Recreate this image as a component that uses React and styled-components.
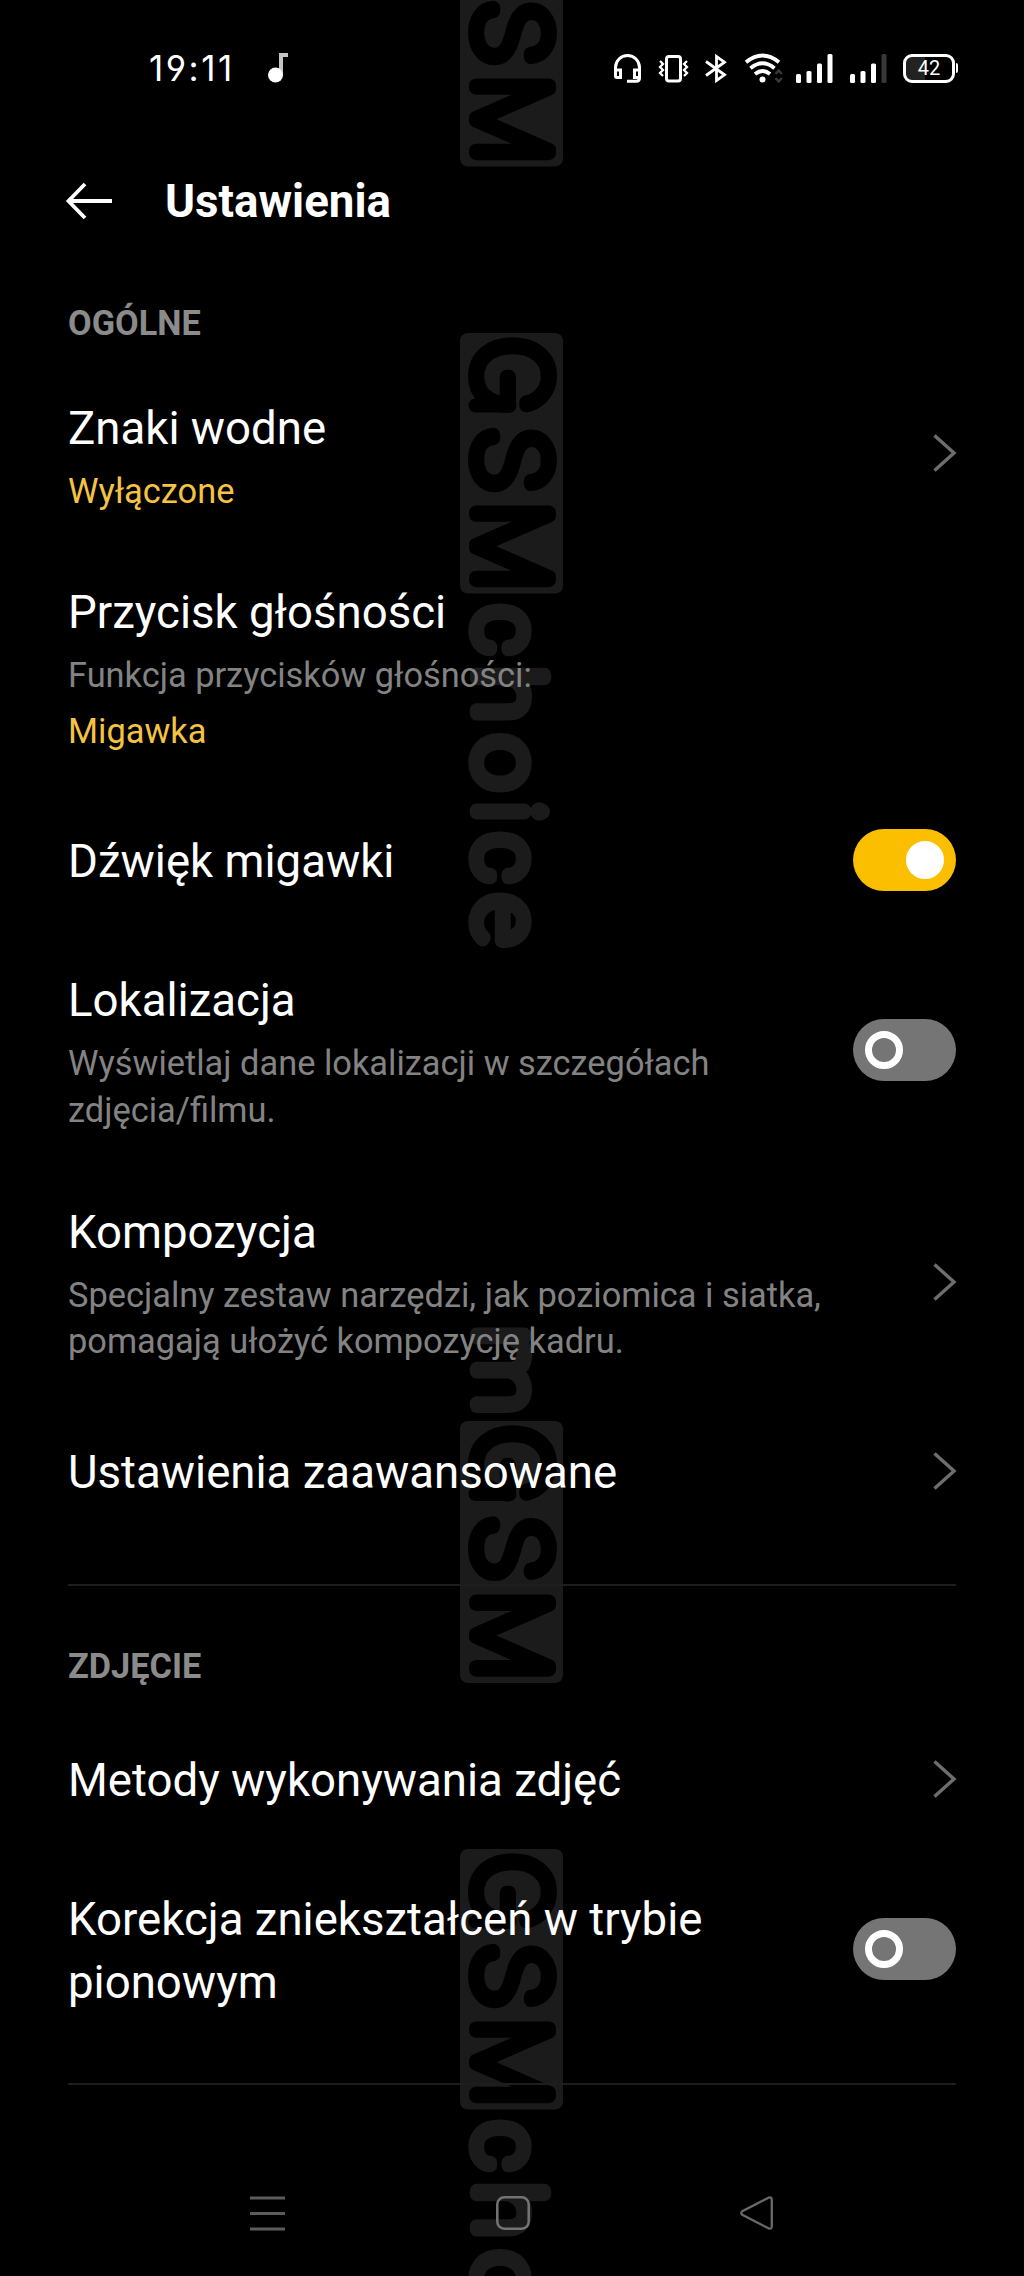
import React from 'react';
import styled, { createGlobalStyle } from 'styled-components';

const GlobalStyle = createGlobalStyle`
  * { box-sizing: border-box; }
  html, body { margin: 0; padding: 0; background: #000; }
`;

const Screen = styled.main`
  position: relative;
  width: 1024px;
  height: 2276px;
  overflow: hidden;
  background: #000;
  color: #fff;
  font-family: Roboto, "Liberation Sans", sans-serif;
`;

const Watermark = styled.svg`
  position: absolute;
  inset: 0;
  pointer-events: none;
`;

const Page = styled.div`
  position: relative;
  height: 100%;
  display: flex;
  flex-direction: column;
`;

const StatusBar = styled.header`
  flex: none;
  height: 136px;
  padding: 0 66px 0 149px;
  display: flex;
  align-items: center;
  justify-content: space-between;
`;

const StatusLeft = styled.div`
  display: flex;
  align-items: center;
  gap: 33px;
`;

const Clock = styled.time`
  font: 400 35px/44px Inter, Roboto, sans-serif;
  font-feature-settings: "ss01", "cv04";
  letter-spacing: 2.5px;
`;

const StatusIcons = styled.div`
  display: flex;
  align-items: center;
`;

const Glyph = styled.svg`
  display: block;
  flex: none;
  fill: none;
  stroke: ${(p) => p.$color || '#fff'};
  stroke-width: ${(p) => p.$weight ?? 3};
  margin-left: ${(p) => p.$gap || 0}px;
  margin-bottom: ${(p) => p.$lift || 0}px;
  overflow: visible;
`;

const Battery = styled.div`
  display: flex;
  align-items: center;
  margin-left: 16px;
`;

const BatteryBody = styled.div`
  width: 52px;
  height: 29px;
  border: 3px solid #fff;
  border-radius: 9px;
  background: linear-gradient(to right, #222 42%, #000 42%);
  font: 400 20px/23px Roboto, sans-serif;
  text-align: center;
`;

const BatteryTip = styled.i`
  width: 2px;
  height: 10px;
  margin-left: 1px;
  border-radius: 0 2px 2px 0;
  background: #fff;
`;

const TitleBar = styled.div`
  flex: none;
  height: 130px;
  padding-left: 66px;
  display: flex;
  align-items: center;
  gap: 53px;
`;

const Title = styled.h1`
  margin: 0;
  padding-top: 1px;
  font-size: 45.7px;
  line-height: 64px;
  font-weight: 700;
`;

const Section = styled.section`
  padding: 0 68px;
`;

const SectionLabel = styled.h2`
  margin: 0;
  padding-top: ${(p) => p.$top}px;
  height: ${(p) => p.$height}px;
  font-size: 34.3px;
  line-height: 46px;
  font-weight: 700;
  color: #8b8b8b;
`;

const Row = styled.div`
  display: flex;
  align-items: center;
  justify-content: space-between;
  min-height: 148px;
  padding: 33.6px 0;
`;

const RowText = styled.div`
  width: ${(p) => p.$width || 780}px;
  display: flex;
  flex-direction: column;
  gap: 8px;
`;

const RowTitle = styled.div`
  font-size: 45.6px;
  line-height: 63px;
`;

const RowNote = styled.div`
  font-size: 34.4px;
  line-height: 46.5px;
  color: ${(p) => (p.$accent ? '#f5c344' : '#838383')};

  & + & {
    margin-top: 1px;
  }
`;

const Switch = styled.div`
  flex: none;
  width: 103px;
  height: 62px;
  margin-bottom: 3px;
  padding: 0 12px;
  border-radius: 31px;
  display: flex;
  align-items: center;
  justify-content: ${(p) => (p.$on ? 'flex-end' : 'flex-start')};
  background: ${(p) => (p.$on ? '#fbbf00' : '#757575')};
`;

const Knob = styled.span`
  width: 38px;
  height: 38px;
  border-radius: 50%;
  border: 7.5px solid #fff;
  background: ${(p) => (p.$on ? '#fff' : 'transparent')};
`;

const Divider = styled.hr`
  flex: none;
  width: 888px;
  height: 2px;
  margin: ${(p) => p.$top}px 68px 0;
  border: 0;
  background: #1e1e1e;
`;

const NavBar = styled.nav`
  flex: none;
  height: 126px;
  margin-top: auto;
  padding: 0 250px;
  display: flex;
  align-items: center;
  justify-content: space-between;
`;

const Chevron = ({ lift = 2 }) => (
  <Glyph width="23" height="38" viewBox="0 0 23 38" $color="#6e6e6e" $weight={3.4} $lift={lift}>
    <path d="M1.5 1.5 21 19 1.5 36.5" />
  </Glyph>
);

const Toggle = ({ on }) => (
  <Switch $on={on} role="switch" aria-checked={!!on}>
    <Knob $on={on} />
  </Switch>
);

const Setting = ({ title, note, value, width, children }) => (
  <Row>
    <RowText $width={width}>
      <RowTitle>{title}</RowTitle>
      {note && <RowNote>{note}</RowNote>}
      {value && <RowNote $accent>{value}</RowNote>}
    </RowText>
    {children}
  </Row>
);

const Signal = ({ gap, last }) => (
  <Glyph width="37" height="29" viewBox="0 0 37 29" $gap={gap} $weight={0}>
    <g fill="#fff">
      <rect y="20" width="5" height="9" rx="1.5" />
      <rect x="10.5" y="17" width="5" height="12" rx="1.5" />
      <rect x="21" y="9.5" width="5" height="19.5" rx="1.5" />
      <rect x="31.5" width="5" height="29" rx="1.5" fill={last} />
    </g>
  </Glyph>
);

const INK = '#1b1b1b';

// x is the distance along the strip; sx widens the letter along it.
const Letter = ({ ch, x, sx = 1, fill = INK }) => (
  <text transform={`translate(${x} 0) scale(${sx} 1)`} fill={fill} stroke={fill}>
    {ch}
  </text>
);

const Badge = () => (
  <g>
    <rect x="0" y="-87.5" width="260.5" height="103" rx="8" fill={INK} />
    <g fontFamily="Inter, sans-serif" fontSize="100" strokeWidth="14">
      <Letter ch="G" x={4} sx={1.044} fill="#000" />
      <path d="M72.5 0V-34" stroke="#000" strokeLinecap="round" />
      <Letter ch="S" x={94} sx={1.077} fill="#000" />
      <Letter ch="M" x={168} sx={1.012} fill="#000" />
    </g>
  </g>
);

const Word = () => (
  <g fontSize="91" strokeWidth="13.5">
    <Letter ch="c" x={273} sx={1.037} />
    <Letter ch="h" x={333.7} sx={1.096} />
    <Letter ch="o" x={403} sx={1.071} />
    <Letter ch="i" x={469.1} />
    <circle cx="478.7" cy="-66.5" r="8" fill={INK} />
    <Letter ch="c" x={501} sx={1.037} />
    <Letter ch="e" x={562.6} sx={1.07} />
  </g>
);

const Strip = ({ y, stretch = 1, children }) => (
  <g transform={`translate(475.5 ${y}) rotate(90) scale(${stretch} 1)`}>{children}</g>
);

const WatermarkLayer = () => (
  <Watermark
    width="1024"
    height="2276"
    viewBox="0 0 1024 2276"
    fontFamily="Roboto, sans-serif"
    fontWeight="100"
    strokeLinejoin="round"
    aria-hidden="true"
  >
    <Strip y={-94}><Badge /></Strip>
    <Strip y={333}><Badge /><Word /></Strip>
    <Strip y={1421} stretch={1.006}>
      <Badge />
      <g fontSize="91" strokeWidth="13.5"><Letter ch="m" x={-93.4} sx={1.05} /></g>
    </Strip>
    <Strip y={1849}><Badge /><Word /></Strip>
  </Watermark>
);

export default function App() {
  return (
    <>
      <GlobalStyle />
      <Screen>
        <WatermarkLayer />
        <Page>
          <StatusBar>
            <StatusLeft>
              <Clock>19:11</Clock>
              <Glyph width="20" height="30" viewBox="0 0 20 30" $weight={0}>
                <path d="M11 0h9v4h-5v18h-4z" fill="#c4c4c4" />
                <circle cx="7.5" cy="22" r="7.5" fill="#fff" />
              </Glyph>
            </StatusLeft>
            <StatusIcons>
              <Glyph width="27" height="29" viewBox="0 0 27 29">
                <path d="M1.5 22V13.5a12 12 0 0 1 24 0V24q0 3.2-3.2 3.2H13" />
                <path d="M1.5 16h5v7.5h-3.5q-1.5 0-1.5-1.5zM25.5 16h-5v7.5h3.5q1.5 0 1.5-1.5z" />
              </Glyph>
              <Glyph width="31" height="29" viewBox="0 0 31 29" $gap={17}>
                <rect x="8.5" y="2.5" width="14" height="24.5" rx="2.5" />
                <path strokeWidth="2.3" d="M2 7l3 3-3 3 3 3-3 3 3 3M29 7l-3 3 3 3-3 3 3 3-3 3" />
              </Glyph>
              <Glyph width="22" height="29" viewBox="0 0 22 29" $gap={16} $weight={2.8}>
                <path d="M1 7.5 19.5 20.8 11.5 26.5V2.5l8 5.7L1 21.5" />
              </Glyph>
              <Glyph width="37" height="29" viewBox="0 0 37 29" $gap={18} $weight={3.8}>
                <path d="M1 8.2q16.5-13.5 33 0M5.5 14.2q12-10 24 0M10 20q7.5-6 15 0" />
                <circle cx="17.5" cy="25.5" r="3" fill="#fff" stroke="none" />
                <path stroke="#383838" strokeWidth="2.5" d="M30.5 20l3.2-3.5 3.2 3.5M30.5 24l3.2 3.5 3.2-3.5" />
              </Glyph>
              <Signal gap={14} last="#fff" />
              <Signal gap={17} last="#383838" />
              <Battery>
                <BatteryBody>42</BatteryBody>
                <BatteryTip />
              </Battery>
            </StatusIcons>
          </StatusBar>

          <TitleBar>
            <Glyph width="46" height="36" viewBox="0 0 46 36" $weight={3.8}>
              <path d="M46 18H2.5M19 1 2.5 18 19 35" />
            </Glyph>
            <Title>Ustawienia</Title>
          </TitleBar>

          <Section>
            <SectionLabel $top={34} $height={97}>OGÓLNE</SectionLabel>
            <Setting title="Znaki wodne" value="Wyłączone"><Chevron lift={4} /></Setting>
            <Setting title="Przycisk głośności" note="Funkcja przycisków głośności:" value="Migawka" />
            <Setting title="Dźwięk migawki"><Toggle on /></Setting>
            <Setting title="Lokalizacja" note="Wyświetlaj dane lokalizacji w szczegółach zdjęcia/filmu." width={680}>
              <Toggle />
            </Setting>
            <Setting title="Kompozycja" note="Specjalny zestaw narzędzi, jak poziomica i siatka, pomagają ułożyć kompozycję kadru.">
              <Chevron />
            </Setting>
            <Setting title="Ustawienia zaawansowane"><Chevron /></Setting>
          </Section>
          <Divider $top={38} />

          <Section>
            <SectionLabel $top={57} $height={120}>ZDJĘCIE</SectionLabel>
            <Setting title="Metody wykonywania zdjęć"><Chevron /></Setting>
            <Setting title="Korekcja zniekształceń w trybie pionowym" width={680}><Toggle /></Setting>
          </Section>
          <Divider $top={36} />

          <NavBar>
            <Glyph width="35" height="35" viewBox="0 0 35 35" $color="#5c5c5c">
              <path d="M0 2h35M0 17.5h35M0 33h35" />
            </Glyph>
            <Glyph width="34" height="34" viewBox="0 0 34 34" $color="#747474" $weight={2.5}>
              <rect x="1.3" y="1.3" width="31.4" height="31.4" rx="7" />
            </Glyph>
            <Glyph width="34" height="34" viewBox="0 0 34 34" $color="#6a6a6a" $weight={2.3}>
              <path d="M2.3 15.2Q.2 17 2.3 18.8L28.5 32.3Q31.8 33.5 31.8 30V4Q31.8.5 28.5 1.7Z" />
            </Glyph>
          </NavBar>
        </Page>
      </Screen>
    </>
  );
}
